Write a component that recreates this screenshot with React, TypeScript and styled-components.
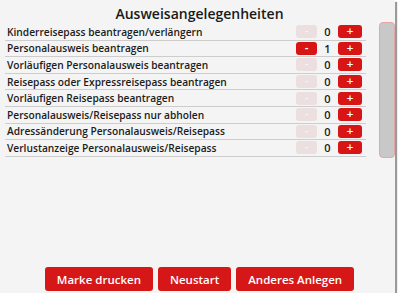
import React, { useState } from 'react';
import styled, { createGlobalStyle } from 'styled-components';

const GlobalStyle = createGlobalStyle`
  body {
    margin: 0;
    background: #ffffff;
    font-family: 'Open Sans', 'DejaVu Sans', sans-serif;
  }
`;

const services = [
  'Kinderreisepass beantragen/verlängern',
  'Personalausweis beantragen',
  'Vorläufigen Personalausweis beantragen',
  'Reisepass oder Expressreisepass beantragen',
  'Vorläufigen Reisepass beantragen',
  'Personalausweis/Reisepass nur abholen',
  'Adressänderung Personalausweis/Reisepass',
  'Verlustanzeige Personalausweis/Reisepass',
];

function App() {
  const [counts, setCounts] = useState<number[]>([0, 1, 0, 0, 0, 0, 0, 0]);

  const change = (i: number, d: number) => {
    setCounts(c => c.map((v, j) => (j === i ? Math.max(0, v + d) : v)));
  };

  return (
    <>
      <GlobalStyle />
      <Window>
        <Title>Ausweisangelegenheiten</Title>
        <Body>
          <List>
            {services.map((name, i) => (
              <Row key={name}>
                <Label>{name}</Label>
                <Stepper>
                  <StepButton disabled={counts[i] === 0} onClick={() => change(i, -1)}>
                    -
                  </StepButton>
                  <Count>{counts[i]}</Count>
                  <StepButton wide onClick={() => change(i, 1)}>
                    +
                  </StepButton>
                </Stepper>
              </Row>
            ))}
          </List>
          <ScrollTrack>
            <Thumb />
          </ScrollTrack>
        </Body>
        <Footer>
          <ActionButton>Marke drucken</ActionButton>
          <ActionButton>Neustart</ActionButton>
          <ActionButton>Anderes Anlegen</ActionButton>
        </Footer>
      </Window>
    </>
  );
}

const Window = styled.div`
  width: 395px;
  height: 293px;
  background: #f4f4f4;
  box-shadow: 2px 2px 1px #9a9a9a;
  display: flex;
  flex-direction: column;
  box-sizing: border-box;
`;

const Title = styled.div`
  height: 24px;
  line-height: 27px;
  text-align: center;
  font-size: 14px;
  font-weight: 600;
  color: #1a1a1a;
  padding-left: 4px;
`;

const Body = styled.div`
  display: flex;
  flex: 1;
`;

const List = styled.div`
  width: 361px;
  margin-left: 5px;
  display: flex;
  flex-direction: column;
`;

const Row = styled.div`
  height: 15.6px;
  border-bottom: 1px solid #cdcdcd;
  display: flex;
  align-items: center;
  justify-content: space-between;
  padding: 0 4px 0 2px;
`;

const Label = styled.span`
  font-size: 10.2px;
  font-weight: 600;
  color: #1c1c1c;
  white-space: nowrap;
`;

const Stepper = styled.div`
  display: flex;
  align-items: center;
`;

const StepButton = styled.button<{ wide?: boolean }>`
  width: ${p => (p.wide ? 24 : 21)}px;
  height: 13px;
  border: none;
  border-radius: 3px;
  padding: 0;
  background: ${p => (p.disabled ? '#ecdfdf' : '#d81515')};
  color: ${p => (p.disabled ? '#f8f2f2' : '#ffffff')};
  font-family: 'DejaVu Sans', sans-serif;
  font-size: 9px;
  font-weight: bold;
  line-height: 13px;
  cursor: pointer;
`;

const Count = styled.span`
  width: 21px;
  text-align: center;
  font-size: 11px;
  font-weight: 600;
  color: #1a1a1a;
`;

const ScrollTrack = styled.div`
  flex: 1;
  display: flex;
  justify-content: flex-end;
`;

const Thumb = styled.div`
  width: 14px;
  height: 134px;
  margin-top: -2px;
  background: #c8c8c8;
  border: 1px solid #e4a6a6;
  border-radius: 4px;
`;

const Footer = styled.div`
  display: flex;
  justify-content: center;
  gap: 5px;
  padding: 0 0 2px 4px;
`;

const ActionButton = styled.button`
  height: 24px;
  padding: 0 12px;
  border: none;
  border-radius: 3px;
  background: #d51717;
  color: #ffffff;
  font-family: 'Open Sans', 'DejaVu Sans', sans-serif;
  font-size: 11.5px;
  font-weight: 600;
  cursor: pointer;
`;

export default App;
